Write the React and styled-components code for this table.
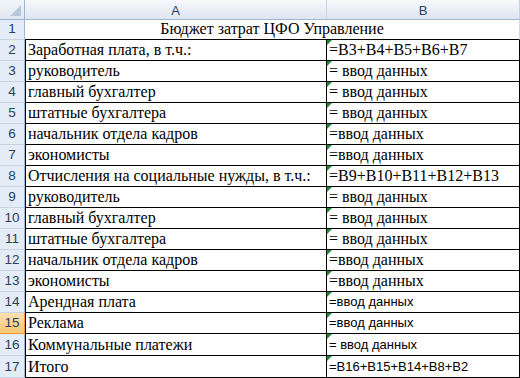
import React from "react";
import styled, { createGlobalStyle } from "styled-components";

const GlobalStyle = createGlobalStyle`
  html, body {
    margin: 0;
    padding: 0;
    background: #ffffff;
  }
`;

const Sheet = styled.div`
  display: grid;
  grid-template-columns: 25px 302px 193px;
  grid-template-rows: 20px 20px repeat(14, 21px) 22px 1fr;
  width: 520px;
  height: 378px;
  overflow: hidden;
  font-family: "Liberation Serif", "Times New Roman", serif;
`;

const Corner = styled.div`
  position: relative;
  box-sizing: border-box;
  background: linear-gradient(#f3f6fb, #dfe7f1);
  border-right: 1px solid #9eb6ce;
  border-bottom: 1px solid #9eb6ce;
  &::after {
    content: "";
    position: absolute;
    right: 3px;
    bottom: 3px;
    border-style: solid;
    border-width: 0 0 11px 11px;
    border-color: transparent transparent #b7c6d8 transparent;
  }
`;

const ColHead = styled.div`
  box-sizing: border-box;
  display: flex;
  align-items: center;
  justify-content: center;
  background: linear-gradient(#f7f9fc, #dde5f0);
  border-right: 1px solid #c5d3e3;
  border-bottom: 1px solid #9eb6ce;
  color: #27415f;
  font-family: "Liberation Sans", Arial, sans-serif;
  font-size: 13px;
  padding-top: 1px;
`;

const RowHead = styled.div`
  box-sizing: border-box;
  display: flex;
  align-items: flex-end;
  justify-content: center;
  padding-bottom: 3px;
  background: ${(p) =>
    p.$active ? "linear-gradient(#fce0b4, #f7c873)" : "#e4ecf7"};
  border-right: 1px solid ${(p) => (p.$active ? "#f29536" : "#9eb6ce")};
  border-bottom: 1px solid ${(p) => (p.$active ? "#f29536" : "#c5d3e3")};
  color: #27415f;
  font-family: "Liberation Sans", Arial, sans-serif;
  font-size: 13.5px;
`;

const Title = styled.div`
  grid-column: 2 / 4;
  box-sizing: border-box;
  display: flex;
  align-items: flex-end;
  justify-content: center;
  padding-bottom: 1px;
  border-bottom: 1px solid #000;
  border-right: 1px solid #d0d7e5;
  font-size: 16px;
  color: #000;
`;

const Cell = styled.div`
  position: relative;
  box-sizing: border-box;
  display: flex;
  align-items: flex-end;
  padding: 0 0 1px 2px;
  border-right: 1px solid #000;
  border-bottom: 1px solid #000;
  border-left: ${(p) => (p.$first ? "1px solid #000" : "none")};
  white-space: nowrap;
  overflow: hidden;
  color: #000;
  font-family: ${(p) =>
    p.$sans
      ? '"Liberation Sans", Arial, sans-serif'
      : '"Liberation Serif", "Times New Roman", serif'};
  font-size: ${(p) => (p.$sans ? "13px" : "16px")};
  padding-bottom: ${(p) => (p.$sans ? "3px" : "1px")};
  ${(p) =>
    p.$flag &&
    `
    &::before {
      content: "";
      position: absolute;
      left: 0;
      top: 0;
      border-style: solid;
      border-width: 5px 5px 0 0;
      border-color: #1e8c2e transparent transparent transparent;
    }
  `}
`;

const rows = [
  ["Заработная плата, в т.ч.:", "=B3+B4+B5+B6+B7"],
  ["руководитель", "= ввод данных"],
  ["главный бухгалтер", "= ввод данных"],
  ["штатные бухгалтера", "= ввод данных"],
  ["начальник отдела кадров", "=ввод данных"],
  ["экономисты", "=ввод данных"],
  ["Отчисления на социальные нужды, в т.ч.:", "=B9+B10+B11+B12+B13"],
  ["руководитель", "= ввод данных"],
  ["главный бухгалтер", "= ввод данных"],
  ["штатные бухгалтера", "= ввод данных"],
  ["начальник отдела кадров", "=ввод данных"],
  ["экономисты", "=ввод данных"],
  ["Арендная плата", "=ввод данных", true],
  ["Реклама", "=ввод данных", true],
  ["Коммунальные платежи", "= ввод данных", true],
  ["Итого", "=B16+B15+B14+B8+B2", true],
];

const App = () => {
  return (
    <>
      <GlobalStyle />
      <Sheet>
        <Corner />
        <ColHead>A</ColHead>
        <ColHead>B</ColHead>

        <RowHead>1</RowHead>
        <Title>Бюджет затрат ЦФО Управление</Title>

        {rows.map(([a, b, sans], i) => {
          const n = i + 2;
          return (
            <React.Fragment key={n}>
              <RowHead $active={n === 15}>{n}</RowHead>
              <Cell $first>{a}</Cell>
              <Cell $flag $sans={sans}>
                {b}
              </Cell>
            </React.Fragment>
          );
        })}
      </Sheet>
    </>
  );
};

export default App;
